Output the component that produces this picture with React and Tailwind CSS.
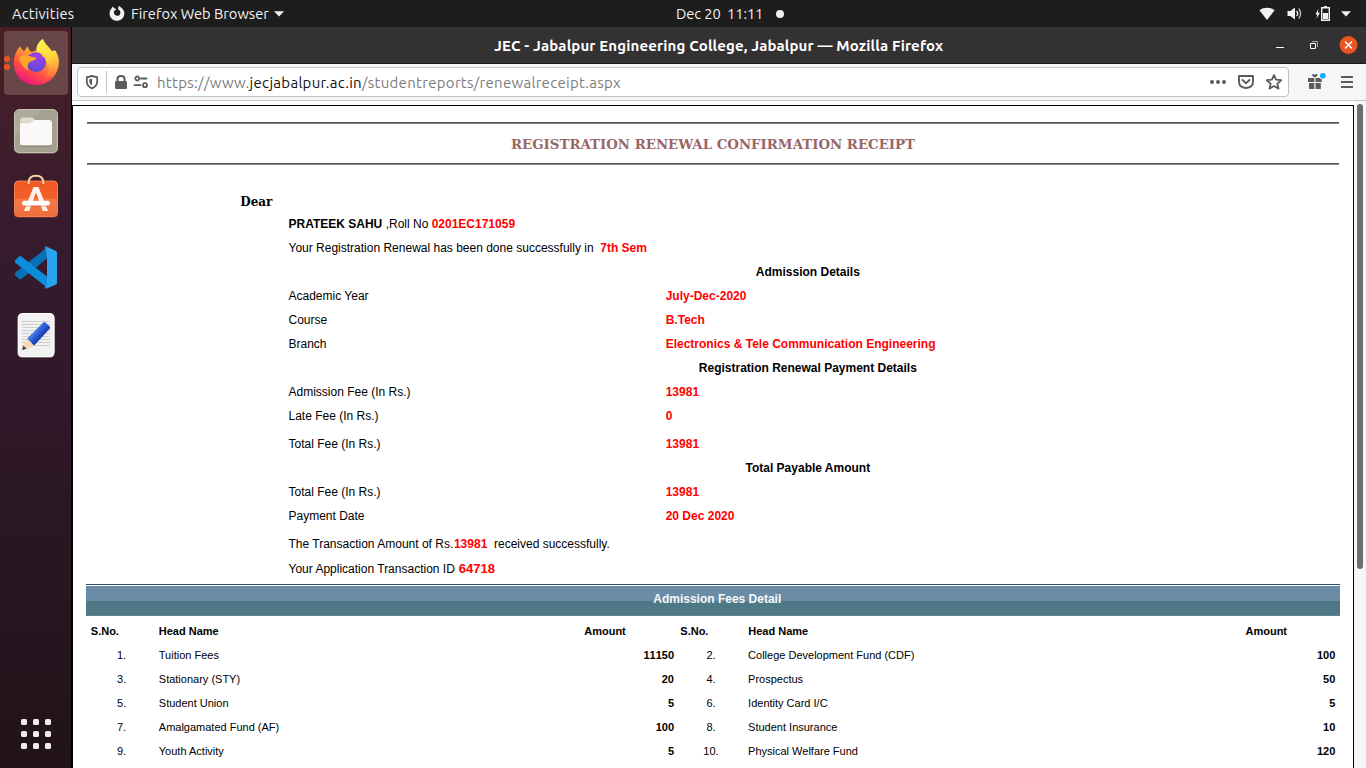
import React from "react";

const details = [
  { kind: "head", text: "Admission Details" },
  { label: "Academic Year", value: "July-Dec-2020" },
  { label: "Course", value: "B.Tech" },
  { label: "Branch", value: "Electronics & Tele Communication Engineering" },
  { kind: "head", text: "Registration Renewal Payment Details" },
  { label: "Admission Fee (In Rs.)", value: "13981" },
  { label: "Late Fee (In Rs.)", value: "0" },
  { label: "Total Fee (In Rs.)", value: "13981", spaced: true },
  { kind: "head", text: "Total Payable Amount" },
  { label: "Total Fee (In Rs.)", value: "13981" },
  { label: "Payment Date", value: "20 Dec 2020" },
];

const fees = [
  ["1.", "Tuition Fees", "11150", "2.", "College Development Fund (CDF)", "100"],
  ["3.", "Stationary (STY)", "20", "4.", "Prospectus", "50"],
  ["5.", "Student Union", "5", "6.", "Identity Card I/C", "5"],
  ["7.", "Amalgamated Fund (AF)", "100", "8.", "Student Insurance", "10"],
  ["9.", "Youth Activity", "5", "10.", "Physical Welfare Fund", "120"],
];

function TopBar() {
  return (
    <header className="flex h-[27px] shrink-0 items-center bg-[#1d1d1d] text-[14.667px] leading-[25px] text-[#f2f2f2]">
      <div className="w-[109px] pl-3 tracking-[0.22px]">Activities</div>
      <svg className="h-4 w-4 shrink-0" viewBox="0 0.8 16 16">
        <path d="M3.6 1.2 L5.5 3.4 C6.2 3.3 6.9 3.5 7.5 4 C6.9 4.2 6.5 4.7 6 5.1 C5 5.5 4.6 6.4 4.9 7.6 C5.3 9.6 6.6 10.6 8.2 10.6 C10 10.6 11.4 9.4 11.4 7.5 C11.4 6.3 10.9 5.4 10 4.8 C9 4 8.7 2.2 10 .8 C10.6 1.5 12.2 2.2 13.2 3.4 C14.6 4.8 15.5 6.7 15.3 8.8 C14.9 12.9 11.8 15.6 8 15.6 C4 15.6 .8 12.6 .6 8.8 C.5 6.5 1.2 4.7 2.4 3.6 Z" fill="#f2f2f2" />
      </svg>
      <div className="ml-[6px] w-[143px] whitespace-nowrap">Firefox Web Browser</div>
      <svg className="h-[6px] w-[10px] shrink-0" viewBox="0 0 10 6"><path d="M0 .3h10L5 5.6Z" fill="#f2f2f2" /></svg>
      <div className="ml-[392px] w-[100px] whitespace-pre pb-px tracking-[-0.1px]">Dec 20  11:11</div>
      <span className="h-2 w-2 rounded-full bg-[#f2f2f2]" />
      <div className="ml-auto flex items-center pr-[15px]">
        <svg className="h-4 w-4" viewBox="0 0 16 16"><path d="M.4 4.2C4.8.9 11.200.9 15.600 4.200L8 14Z" fill="#f2f2f2" /></svg>
        <svg className="ml-3 h-4 w-4" viewBox="0 0.5 16 16">
          <path d="M.5 5.500h2.800L8 2v12L3.300 10.500H.5Z" fill="#f2f2f2" />
          <path d="M9.700 5.500q2 2.500 0 5" fill="none" stroke="#f2f2f2" strokeWidth="1.400" />
          <path d="M11.800 3q3.600 5 0 10" fill="none" stroke="#bcbcbc" strokeWidth="1.300" />
        </svg>
        <svg className="ml-3 h-4 w-4" viewBox="0 0.5 16 16">
          <path d="M3.300 3.500 L.500 9h1.700L1.500 13 5 7.300H3Z" fill="#f2f2f2" />
          <path d="M6.700 2.200h7.600v12.600H6.700Z" fill="none" stroke="#f2f2f2" strokeWidth="1.400" />
          <path d="M9 .5h3v1.500H9zM8 7.500h5v6H8z" fill="#f2f2f2" />
        </svg>
        <svg className="ml-[10px] h-[6px] w-[10px]" viewBox="0 0 10 6"><path d="M0 .3h10L5 5.600Z" fill="#f2f2f2" /></svg>
      </div>
    </header>
  );
}

function FirefoxIcon() {
  return (
    <svg className="h-[48px] w-[48px]" viewBox="0 2.3 48 48">
      <defs>
        <linearGradient id="ffBody" x1=".8" y1=".05" x2=".3" y2=".98">
          <stop offset=".05" stopColor="#fff44f" />
          <stop offset=".38" stopColor="#ffa436" />
          <stop offset=".68" stopColor="#ff5540" />
          <stop offset="1" stopColor="#f0147e" />
        </linearGradient>
        <linearGradient id="ffTail" x1=".4" y1="0" x2=".7" y2="1">
          <stop offset="0" stopColor="#fff450" />
          <stop offset=".5" stopColor="#ffd43c" />
          <stop offset="1" stopColor="#ff8a3a" stopOpacity=".2" />
        </linearGradient>
        <radialGradient id="ffGlobe" cx=".6" cy=".2" r=".85">
          <stop offset="0" stopColor="#a43cf0" />
          <stop offset=".6" stopColor="#7548dc" />
          <stop offset="1" stopColor="#5b4ac4" />
        </radialGradient>
      </defs>
      <path d="M8.500 9.500C9.300 12 10.300 13.300 12.300 14.400C13.600 12 14.800 10.300 16 9.800C16.300 12.200 17.200 14 19.800 15.400C21.500 14.300 23 14 24.500 13.800C24 8.800 27.500 4.500 30.800 2.300C32.800 7.500 36 9.200 39.500 14C41 15 42 13.500 42.500 13.200C45 16 47 20 46.800 26C46.500 39 36 48.300 24.300 48.300C11.500 48.300 2 39 1.800 26.500C1.700 19 4.500 13 8.500 9.500Z" fill="url(#ffBody)" />
      <path d="M30.800 2.300C32.800 7.500 36 9.200 39.500 14C41 15 42 13.500 42.500 13.200C46 18 47.300 24 46 29C44 36 39 41 33 41C37 37 38 32 36 27C33 20 23 16 24.500 12.500C24.900 8 27.600 4.600 30.800 2.300Z" fill="url(#ffTail)" />
      <circle cx="24" cy="25.500" r="10" fill="url(#ffGlobe)" />
      <path d="M7 22C9 18.800 13.500 18 17.200 19.200C20 20.100 22 20 24.600 21.300C23.800 23.500 20.500 23.800 18 25.200C15 27 15 31 17.500 34C11.500 32 9.400 27.200 7 22Z" fill="#ffa52a" />
      <path d="M29 15.500C33 17.500 36.500 22 36 28C35.300 23.500 33.500 21 30 19.300Z" fill="#ffcf38" />
    </svg>
  );
}

function FilesIcon() {
  return (
    <svg className="h-[48px] w-[48px]" viewBox="0 0 48 48">
      <rect x="2" y="2.500" width="44" height="44" rx="5" fill="#8f8b7b" />
      <rect x="2.500" y="2.500" width="43" height="43" rx="5" fill="#a5a190" stroke="#c5c2b3" />
      <path d="M3 30 30 3H8Q3 3 3 8Z" fill="#aeaa9a" />
      <path d="M8 14q0-3.500 3-3.500h8q2 0 3.500 2l2 2.500H8Z" fill="#dfdcd1" />
      <path d="M8 17.500q0-2 2-2h8c2 0 3-2.500 5-2.500h14q3 0 3 3v19.500q0 3-3 3H11q-3 0-3-3Z" fill="#faf9f7" />
      <path d="M9 38.500q1 .7 3 .7h24q2 0 3-.7" fill="none" stroke="#858171" />
    </svg>
  );
}

function SoftwareIcon() {
  return (
    <svg className="h-[48px] w-[48px]" viewBox="0 1.5 48 48">
      <defs><linearGradient id="bag" x1="0" y1="0" x2="0" y2="1"><stop stopColor="#f15a24" /><stop offset=".49" stopColor="#f26028" /><stop offset=".5" stopColor="#f4794b" /><stop offset="1" stopColor="#ef6c3b" /></linearGradient></defs>
      <rect x="2" y="10" width="44" height="36" rx="4" fill="#a63d1b" />
      <rect x="2.500" y="9.500" width="43" height="35.500" rx="4" fill="url(#bag)" stroke="#fb8a5e" strokeWidth=".8" />
      <path d="M16.700 12.500V11Q16.700 4.300 24 4.300T31.300 11v1.500" fill="none" stroke="#f9d6a7" strokeWidth="1.900" />
      <path d="M21.500 15.500h5L36 39.500h-5.200L24 21 17.200 39.500H12Z" fill="#fff1e8" />
      <path d="M12 34.300h24" stroke="#cf5127" strokeOpacity=".6" strokeWidth="1.200" />
      <rect x="10" y="29.300" width="28" height="4.700" rx="2.300" fill="#fff" />
    </svg>
  );
}

function CodeIcon() {
  return (
    <svg className="h-[48px] w-[48px]" viewBox="0 0 48 48">
      <path d="m3 32 4 4q1 .8 2.400 0L35 15.500V4.500L3.500 29.500q-1.400 1.200-.5 2.500Z" fill="#0871b6" />
      <path d="m3 17.500 4-4q1-.8 2.400 0L35 33.500v11L3.500 20q-1.400-1.200-.5-2.500Z" fill="#0d8cda" />
      <path d="M34 3.300 44 8q1 .5 1 1.700v30q0 1.200-1 1.700l-10 4.400q1-.5 1-2.300V5.500q0-1.800-1-2.200Z" fill="#29a3ef" />
      <path d="M34 3.300q-.9 0-1.500.7L35 14V5Q35 3.800 34 3.300ZM32.500 45l2.500-9v8q0 1.600-1 1.800Z" fill="#1b8fd9" />
    </svg>
  );
}

function TextIcon() {
  return (
    <svg className="h-[48px] w-[48px]" viewBox="0 0 48 48">
      <rect x="5.500" y="2.500" width="37" height="44" rx="4.500" fill="#b9b5b5" />
      <rect x="6.500" y="2.500" width="35.500" height="43" rx="4" fill="#f2f1f1" stroke="#fff" />
      <path d="M10 10.500h28M10 13.500h28M10 16.500h28M10 19.500h28M10 22.500h28M10 25.500h28M10 28.500h28M10 31.500h28M10 34.500h28" stroke="#d0cfcf" />
      <path d="m16 27.500 6 7.500-7.500 2.800-4.500-2Z" fill="#f8d9b3" />
      <path d="M11.300 34.800 14.700 37.500l-3.200 1.200q-2 .4-1.300-1Z" fill="#454545" />
      <path d="M15.500 27.500 31.500 11.500q1-.7 2 0l4 4.300q.7 1 0 2L22 34.500Z" fill="#2e5ed8" />
      <path d="m19.500 31.500 16.500-17.500 2 2.200q.3.900-.5 1.600L22 34.500Z" fill="#2046b6" />
      <path d="M15.500 27.500 31.500 11.500l1.500-.2L17.700 30Z" fill="#4675e8" />
    </svg>
  );
}

function Dock() {
  return (
    <aside className="flex w-[72px] shrink-0 flex-col items-center border-r border-black bg-linear-to-b from-[#491f27] via-[#361b2f] via-30% to-[#211319]">
      <div className="relative mt-1 flex h-16 w-16 items-center justify-center rounded-[4px] bg-[#694748]">
        <FirefoxIcon />
        <span className="absolute left-0 top-[25px] h-[6px] w-[6px] rounded-full bg-[#e95420]" />
        <span className="absolute left-0 top-[33px] h-[6px] w-[6px] rounded-full bg-[#e95420]" />
      </div>
      <div className="mt-3"><FilesIcon /></div>
      <div className="mt-[18px]"><SoftwareIcon /></div>
      <div className="mt-[22px]"><CodeIcon /></div>
      <div className="mt-5"><TextIcon /></div>
      <div className="mb-[19px] mt-auto grid grid-cols-3 gap-[6px]">
        {Array.from({ length: 9 }, (_, i) => (
          <span key={i} className="h-[6px] w-[6px] rounded-[1.5px] bg-[#f0efee]" />
        ))}
      </div>
    </aside>
  );
}

function TitleBar() {
  return (
    <div className="flex h-[37px] shrink-0 items-center border-b border-[#1b1a1a] bg-[#333132] text-white">
      <div className="w-[422px]" />
      <div className="whitespace-nowrap pt-[3px] text-[15px] font-bold tracking-[0.13px]">JEC - Jabalpur Engineering College, Jabalpur — Mozilla Firefox</div>
      <div className="ml-auto flex items-center pr-2">
        <svg className="h-4 w-4" viewBox="0 0 16 16"><path d="M4 10.500h8" stroke="#fff" /></svg>
        <svg className="ml-[18px] h-4 w-4" viewBox="0 0 16 16"><path d="M4.500 6.500h5v5h-5z" fill="none" stroke="#fff" /><path d="M6 4.500h5.500V10" fill="none" stroke="#aaa" /></svg>
        <svg className="ml-[17px] h-[19px] w-[19px]" viewBox="0 0 19 19"><circle cx="9.500" cy="9" r="9" fill="#e95420" /><path d="m6 5.500 7 7M13 5.500l-7 7" stroke="#fff" strokeWidth="1.500" /></svg>
      </div>
    </div>
  );
}

function AddressBar() {
  return (
    <div className="flex h-[37px] shrink-0 items-center border-b border-[#c9c9ca] bg-[#f5f6f7] pl-[5px]">
      <div className="flex h-[30px] w-[1212px] items-center rounded-[4px] border border-[#c2c2c3] bg-white">
        <svg className="ml-[6px] h-4 w-4" viewBox="0 0 16 16">
          <path d="M8 1.900c2 .9 3.600 1.200 5.200 1.200v4.300c0 3.200-2 5.600-5.200 6.900-3.200-1.300-5.200-3.700-5.200-6.900V3.100c1.600 0 3.200-.3 5.200-1.200Z" fill="none" stroke="#5b5b5e" strokeWidth="1.800" strokeLinejoin="round" />
          <path d="M8 4.500v7C6 10.300 5.300 9 5.300 7.300V5.200q1.500-.2 2.700-.7Z" fill="#5b5b5e" />
        </svg>
        <span className="ml-[6px] h-[22px] w-px bg-[#c4c4c6]" />
        <svg className="ml-[6px] h-4 w-4" viewBox="0 0 16 16"><path d="M4.500 8V4.500Q4.500 2 8 2t3.500 2.500V8" fill="none" stroke="#5b5b5e" strokeWidth="2" /><rect x="2" y="7" width="12" height="8" rx="1.200" fill="#5b5b5e" /></svg>
        <svg className="ml-1 h-4 w-4" viewBox="0 0 16 16"><g fill="none" stroke="#5b5b5e" strokeWidth="1.800"><circle cx="4.300" cy="4.500" r="2" /><path d="M8 4.500h5.500M1.500 11.200h6" strokeLinecap="round" /><circle cx="12" cy="11.200" r="2" /></g></svg>
        <div className="ml-2 whitespace-nowrap pt-[2px] text-[15px] tracking-[0.29px] text-[#7c7c7d]">
          https://www.<span className="text-[#111]">jecjabalpur.ac.in</span>/studentreports/renewalreceipt.aspx
        </div>
        <svg className="ml-auto h-4 w-[18px]" viewBox="0 0 18 16"><g fill="#5b5b5e"><circle cx="3" cy="8" r="2" /><circle cx="9" cy="8" r="2" /><circle cx="15" cy="8" r="2" /></g></svg>
        <svg className="ml-[10px] h-[18px] w-[18px]" viewBox="0 0 18 18"><g fill="none" stroke="#5b5b5e" strokeWidth="1.900" strokeLinecap="round" strokeLinejoin="round"><path d="M2 3h14v5.500q0 6-7 6.500-7-.5-7-6.500Z" /><path d="m5.500 7 3.500 3.300L12.500 7" /></g></svg>
        <svg className="ml-[10px] mr-[5px] h-[18px] w-[18px]" viewBox="0 0 18 18"><path d="m9 2 2.100 4.700 5.100.5-3.900 3.400 1.200 5L9 13l-4.500 2.600 1.200-5-3.900-3.400 5.100-.5Z" fill="none" stroke="#5b5b5e" strokeWidth="1.800" strokeLinejoin="round" /></svg>
      </div>
      <svg className="ml-[18px] h-[18px] w-[20px]" viewBox="0 0 20 18">
        <g fill="#5b5b5e"><path d="M1 5h6.300v4H1zM8.500 5h6.300v4H8.500zM2 10h5.300v6H2zM8.500 10h5.300v6H8.500z" /><path d="M7.800 4.500Q4.500 3 5.300 1.200q1.500-.8 2.500.8 1-1.600 2.500-.8.800 1.800-2.500 3.300Z" /></g>
        <circle cx="15.800" cy="2.800" r="3.700" fill="#f5f6f7" /><circle cx="15.800" cy="2.800" r="2.800" fill="#06aefd" />
      </svg>
      <svg className="ml-3 h-4 w-4" viewBox="0 0 16 16"><path d="M2 3h12M2 8h12M2 13h12" stroke="#5b5b5e" strokeWidth="1.800" /></svg>
    </div>
  );
}

function Rule() {
  return <div className="h-[2px] border-t border-[#555] bg-[#858585]" />;
}

function DetailRow({ row }) {
  if (row.kind === "head") {
    return <div className="h-6 pr-[0.3px] text-center font-bold">{row.text}</div>;
  }
  return (
    <div className={row.spaced ? "flex h-7 pt-1" : "flex h-6"}>
      <div className="w-[377.200px]">{row.label}</div>
      <div className="font-bold text-[#f00]">{row.value}</div>
    </div>
  );
}

function Receipt() {
  return (
    <div className="flex min-h-0 flex-1 bg-white">
      <main className="mt-1 flex w-[1282px] shrink-0 flex-col overflow-hidden border border-b-0 border-black px-[13px] font-['Liberation_Sans',Arial,sans-serif] text-black">
        <div className="px-px pt-4">
          <Rule />
          <h1 className="h-[39px] text-center font-['DejaVu_Serif',serif] text-[13.333px] font-bold leading-[40px] text-[#996666]">REGISTRATION RENEWAL CONFIRMATION RECEIPT</h1>
          <Rule />
        </div>
        <div className="ml-[154.300px] mt-[25px] h-[22px] font-['DejaVu_Serif',serif] text-[12px] font-bold leading-6">Dear</div>
        <section className="ml-[202.500px] w-[1039px] text-[12px] leading-6">
          <div className="h-6"><b>PRATEEK SAHU</b> ,Roll No <b className="text-[#f00]">0201EC171059</b></div>
          <div className="h-6">Your Registration Renewal has been done successfully in &nbsp;<b className="text-[#f00]">7th Sem</b></div>
          {details.map((row, i) => <DetailRow key={i} row={row} />)}
          <div className="h-7 pt-1">The Transaction Amount of Rs.<b className="ml-[0.7px] text-[#f00]">13981</b> &nbsp;received successfully.</div>
          <div className="h-[28px] pt-px">Your Application Transaction ID <b className="ml-[0.7px] text-[13px] text-[#f00]">64718</b></div>
        </section>
        <div className="h-px shrink-0 bg-[#2f4a66]" />
        <h2 className="mt-px h-[30px] shrink-0 border-b border-[#5f8391] bg-linear-to-b from-[#6b8ca6] from-[15px] to-[#4f7886] to-[15px] pl-[8.500px] text-center text-[12px] font-bold leading-[26px] text-[#f4f8fa]">Admission Fees Detail</h2>
        <section className="mt-[3px] text-[11px] leading-6">
          <div className="grid grid-cols-[71px_377px_142px_70px_449px_142px] font-bold">
            <span className="pl-[4.800px]">S.No.</span><span className="pl-[1.800px]">Head Name</span><span className="text-center">Amount</span>
            <span className="pl-[4.300px]">S.No.</span><span className="pl-[2.300px]">Head Name</span><span className="pl-[0.500px] text-center">Amount</span>
          </div>
          {fees.map((r) => (
            <div key={r[0]} className="grid grid-cols-[71px_377px_142px_70px_449px_142px]">
              <span className="text-center">{r[0]}</span><span className="pl-[1.800px]">{r[1]}</span><span className="pr-[2px] text-right font-bold [font-kerning:none]">{r[2]}</span>
              <span className="text-center">{r[3]}</span><span className="pl-[2.100px]">{r[4]}</span><span className="pr-[1.700px] text-right font-bold">{r[5]}</span>
            </div>
          ))}
        </section>
      </main>
      <div className="flex-1 bg-[#f6f6f6] pl-[3px] pt-[3px]">
        <div className="h-[465px] w-[6px] rounded-full bg-[#6d6d6d]" />
      </div>
    </div>
  );
}

export default function App() {
  return (
    <div className="flex h-screen w-screen flex-col overflow-hidden font-['Ubuntu','Noto_Sans',sans-serif]">
      <TopBar />
      <div className="flex min-h-0 flex-1">
        <Dock />
        <div className="flex min-w-0 flex-1 flex-col">
          <TitleBar />
          <AddressBar />
          <Receipt />
        </div>
      </div>
    </div>
  );
}
